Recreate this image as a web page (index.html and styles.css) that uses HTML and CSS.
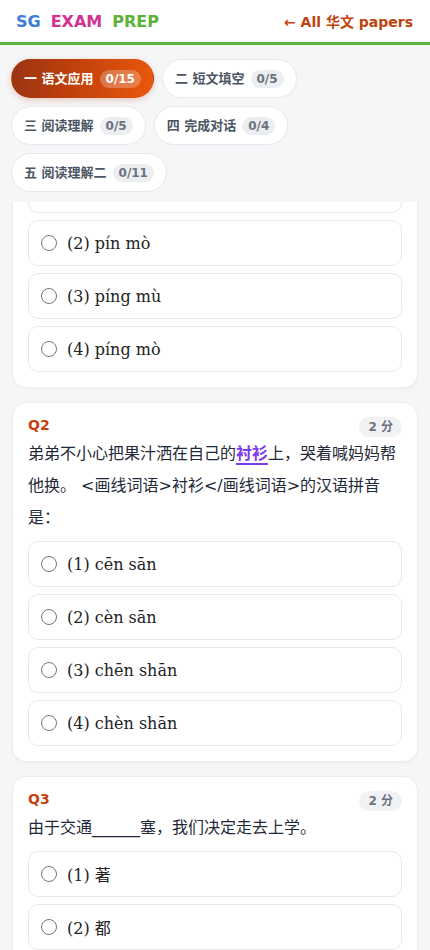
FILE: index.html
```html
<!DOCTYPE html>
<html lang="zh">
<head>
  <meta charset="UTF-8" />
  <title>SG Exam Prep - 华文</title>
  <link rel="stylesheet" href="styles.css">
</head>
<body>
  <div class="app">

    <header class="topbar">
      <div class="logo">
        <span class="logo-sg">SG</span>
        <span class="logo-exam">EXAM</span>
        <span class="logo-prep">PREP</span>
      </div>
      <a class="back-link" href="#">← All 华文 papers</a>
    </header>

    <nav class="tabs">
      <div class="tab active">一 语文应用 <span class="tab-count">0/15</span></div>
      <div class="tab">二 短文填空 <span class="tab-count">0/5</span></div>
      <div class="tab">三 阅读理解 <span class="tab-count">0/5</span></div>
      <div class="tab">四 完成对话 <span class="tab-count">0/4</span></div>
      <div class="tab">五 阅读理解二 <span class="tab-count">0/11</span></div>
    </nav>

    <main class="questions" id="questions">

      <section class="q-card">
        <div class="q-head">
          <span class="q-num">Q1</span>
          <span class="q-marks">2 分</span>
        </div>
        <p class="q-text">教室里的<span class="mark">屏幕</span>坏了，老师请工人来修理。 &lt;画线词语&gt;屏幕&lt;/画线词语&gt;的汉语拼音是：</p>
        <div class="options">
          <label class="option"><span class="radio"></span><span class="opt-text">(1) pín mù</span></label>
          <label class="option" id="q1-opt2"><span class="radio"></span><span class="opt-text">(2) pín mò</span></label>
          <label class="option"><span class="radio"></span><span class="opt-text">(3) píng mù</span></label>
          <label class="option"><span class="radio"></span><span class="opt-text">(4) píng mò</span></label>
        </div>
      </section>

      <section class="q-card">
        <div class="q-head">
          <span class="q-num">Q2</span>
          <span class="q-marks">2 分</span>
        </div>
        <p class="q-text">弟弟不小心把果汁洒在自己的<span class="mark">衬衫</span>上，哭着喊妈妈帮他换。 &lt;画线词语&gt;衬衫&lt;/画线词语&gt;的汉语拼音是：</p>
        <div class="options">
          <label class="option"><span class="radio"></span><span class="opt-text">(1) cēn sān</span></label>
          <label class="option"><span class="radio"></span><span class="opt-text">(2) cèn sān</span></label>
          <label class="option"><span class="radio"></span><span class="opt-text">(3) chēn shān</span></label>
          <label class="option"><span class="radio"></span><span class="opt-text">(4) chèn shān</span></label>
        </div>
      </section>

      <section class="q-card">
        <div class="q-head">
          <span class="q-num">Q3</span>
          <span class="q-marks">2 分</span>
        </div>
        <p class="q-text">由于交通______塞，我们决定走去上学。</p>
        <div class="options">
          <label class="option"><span class="radio"></span><span class="opt-text">(1) 著</span></label>
          <label class="option"><span class="radio"></span><span class="opt-text">(2) 都</span></label>
          <label class="option"><span class="radio"></span><span class="opt-text">(3) 堵</span></label>
          <label class="option"><span class="radio"></span><span class="opt-text">(4) 睹</span></label>
        </div>
      </section>

    </main>
  </div>

  <script>
    const list = document.getElementById('questions');
    const opt = document.getElementById('q1-opt2');
    list.scrollTop = opt.getBoundingClientRect().top - list.getBoundingClientRect().top - 18;
  </script>
</body>
</html>
```

FILE: styles.css
```css
body {
  margin: 0;
  background: #f5f6f8;
  font-family: "DejaVu Sans", "Noto Sans CJK SC", sans-serif;
  color: #1f2937;
}

.app {
  display: flex;
  flex-direction: column;
  height: 100vh;
}

/* Header */
.topbar {
  height: 42px;
  padding: 0 17px 0 16px;
  display: flex;
  justify-content: space-between;
  align-items: center;
  background: #ffffff;
  border-bottom: 3px solid #5cb63c;
  flex-shrink: 0;
}

.logo {
  display: flex;
  gap: 10px;
  font-size: 16px;
  font-weight: 700;
}

.logo-sg { color: #3b7dd8; }
.logo-exam { color: #d4328f; }
.logo-prep { color: #5db33a; }

.back-link {
  font-size: 14px;
  font-weight: 700;
  color: #c2410c;
  text-decoration: none;
}

/* Section tabs */
.tabs {
  display: flex;
  flex-wrap: wrap;
  gap: 8px;
  padding: 14px 11px 10px;
  flex-shrink: 0;
}

.tab {
  display: flex;
  align-items: center;
  gap: 6px;
  padding: 9px 12px;
  line-height: 19px;
  font-size: 13px;
  font-weight: 700;
  color: #4b5563;
  background: #ffffff;
  border: 1px solid #e6e8eb;
  border-radius: 999px;
}

.tab.active {
  color: #ffffff;
  background: linear-gradient(100deg, #9a3412 0%, #c2410c 45%, #ea580c 100%);
  border-color: transparent;
  box-shadow: 0 2px 6px rgba(194, 65, 12, 0.25);
}

.tab-count {
  font-size: 12px;
  line-height: 18px;
  padding: 0 6px;
  border-radius: 9px;
  background: #eceef1;
  color: #6b7280;
}

.tab.active .tab-count {
  background: rgba(255, 255, 255, 0.25);
  color: #ffffff;
}

/* Question list */
.questions {
  flex: 1;
  overflow: hidden;
  padding: 0 12px 20px;
  display: flex;
  flex-direction: column;
  gap: 14px;
}

.q-card {
  flex-shrink: 0;
  background: #ffffff;
  border: 1px solid #eceef1;
  border-radius: 14px;
  padding: 12px 15px 15px;
  box-shadow: 0 1px 3px rgba(0, 0, 0, 0.04);
}

.q-head {
  display: flex;
  justify-content: space-between;
  align-items: flex-start;
}

.q-num {
  font-size: 14px;
  line-height: 20px;
  font-weight: 700;
  color: #c2410c;
}

.q-marks {
  margin-top: 2px;
  font-size: 12px;
  font-weight: 700;
  line-height: 20px;
  padding: 0 9px;
  border-radius: 10px;
  background: #f1f2f4;
  color: #6b7280;
}

.q-text {
  margin: 1px 0 7px;
  font-size: 16px;
  line-height: 32px;
  color: #1f2937;
}

.mark {
  color: #7c3aed;
  font-weight: 600;
  text-decoration: underline;
  text-decoration-thickness: 2px;
  text-underline-offset: 4px;
}

.options {
  display: flex;
  flex-direction: column;
  gap: 7px;
}

.option {
  height: 44px;
  display: flex;
  align-items: center;
  gap: 10px;
  padding: 0 12px;
  border: 1px solid #e7e9ec;
  border-radius: 10px;
  cursor: pointer;
}

.radio {
  width: 14px;
  height: 14px;
  border: 1px solid #767676;
  border-radius: 50%;
  background: #ffffff;
}

.opt-text {
  font-family: "DejaVu Serif", "Noto Sans CJK SC", serif;
  font-size: 16px;
  color: #222222;
}
```
